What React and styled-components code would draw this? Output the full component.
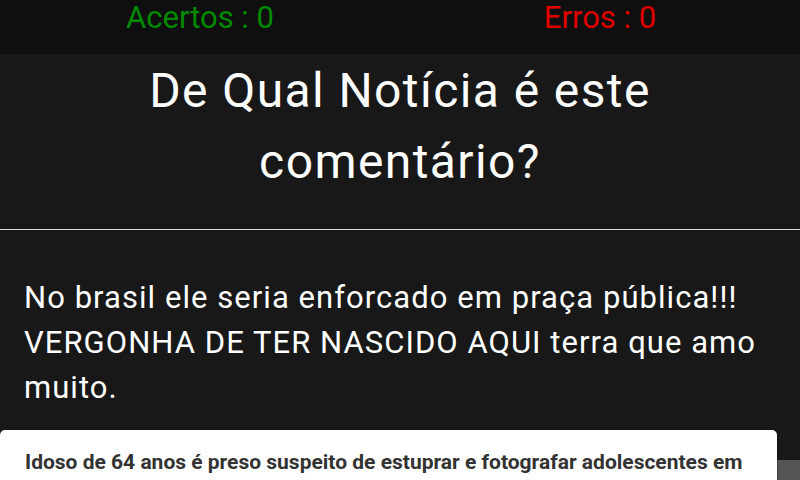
import React from "react";
import styled, { createGlobalStyle } from "styled-components";

const Global = createGlobalStyle`
  html, body { margin: 0; padding: 0; background: #181818; overflow: hidden; }
  body { font-family: Roboto, "Noto Sans", sans-serif; width: 800px; height: 480px; }
`;

const Page = styled.div`
  width: 800px;
  height: 480px;
  display: flex;
  flex-direction: column;
  background: #181818;
  position: relative;
  overflow: hidden;
`;

const ScoreBar = styled.div`
  height: 54px;
  background: #0f0f0f;
  display: grid;
  grid-template-columns: 1fr 1fr;
`;

const Score = styled.div`
  text-align: center;
  font-size: 31px;
  line-height: 36px;
  color: ${(p) => p.$color};
`;

const Title = styled.h1`
  margin: 0;
  height: 176px;
  box-sizing: border-box;
  padding: 1px 40px 0;
  text-align: center;
  font-weight: 400;
  font-size: 48px;
  line-height: 71px;
  letter-spacing: 1.4px;
  color: #fff;
  border-bottom: 1px solid #d8d8d8;
`;

const Comment = styled.p`
  margin: 0;
  padding: 45px 24px 0;
  font-size: 31px;
  line-height: 45px;
  letter-spacing: 1.05px;
  color: #fff;
`;

const Button = styled.div`
  position: absolute;
  right: 0;
  top: 460px;
  width: 23px;
  height: 20px;
  background: #555;
`;

const Card = styled.div`
  position: absolute;
  left: 0;
  top: 430px;
  width: 777px;
  height: 70px;
  box-sizing: border-box;
  background: #fff;
  border-radius: 5px;
  box-shadow: 0 0 2px rgba(0,0,0,0.6);
  padding: 19px 25px;
`;

const CardText = styled.div`
  font-weight: 700;
  font-size: 21px;
  line-height: 26px;
  color: #333;
  white-space: nowrap;
`;

export default function App() {
  return (
    <Page>
      <Global />
      <ScoreBar>
        <Score $color="#008a00">Acertos : 0</Score>
        <Score $color="#e00000">Erros : 0</Score>
      </ScoreBar>
      <Title>De Qual Notícia é este comentário?</Title>
      <Comment>
        No brasil ele seria enforcado em praça pública!!! VERGONHA DE TER NASCIDO AQUI terra que amo muito.
      </Comment>
      <Button />
      <Card>
        <CardText>Idoso de 64 anos é preso suspeito de estuprar e fotografar adolescentes em</CardText>
      </Card>
    </Page>
  );
}
